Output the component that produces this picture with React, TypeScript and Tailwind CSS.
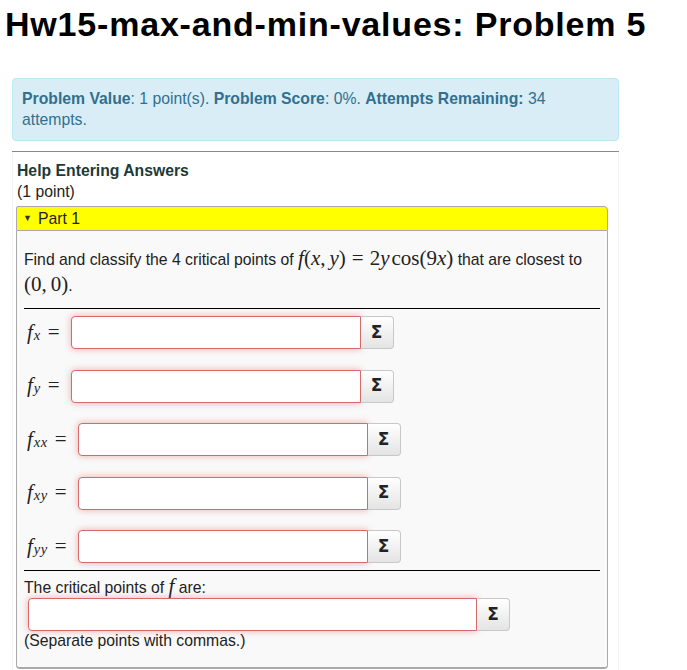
import React from "react";

const serif = { fontFamily: '"Liberation Serif", "DejaVu Serif", serif' } as const;

function MI({ children }: { children: React.ReactNode }) {
  return <span className="italic">{children}</span>;
}

function Label({ sub }: { sub: string }) {
  return (
    <span className="text-[21px] text-[#222] whitespace-nowrap pl-[3px]" style={serif}>
      <MI>f</MI>
      <sub className="italic text-[14.5px] relative top-[1px] ml-[1px] tracking-[0.5px]">{sub}</sub>
      <span className="ml-[7px]">=</span>
    </span>
  );
}

function AnswerBox({ w }: { w: string }) {
  return (
    <div className="flex items-stretch h-[33px]">
      <div
        className={`${w} bg-white border border-[#d46a6a] rounded-l-[4px] shadow-[0_0_7px_rgba(220,60,60,0.4)]`}
      />
      <div
        className="w-[33px] flex items-center justify-center border border-[#c8c8c8] border-l-0 rounded-r-[4px] bg-gradient-to-b from-white to-[#e4e4e4] text-[17px] font-bold text-[#222]"
        style={{ fontFamily: '"DejaVu Sans", sans-serif' }}
      >
        Σ
      </div>
    </div>
  );
}

function Row({ sub }: { sub: string }) {
  return (
    <div className="flex items-center h-[33px]">
      <Label sub={sub} />
      <div className="ml-[11px]">
        <AnswerBox w="w-[290px]" />
      </div>
    </div>
  );
}

export default function App() {
  return (
    <div
      className="bg-white w-[687px] h-[670px] overflow-hidden"
      style={{ fontFamily: '"Liberation Sans", Arial, sans-serif' }}
    >
      <h1 className="pt-[7px] pl-[5px] text-[34px] leading-[35px] font-bold text-black tracking-[0.8px] whitespace-nowrap">
        Hw15-max-and-min-values: Problem 5
      </h1>
      <div className="mt-[36px] ml-[12px] w-[607px] bg-[#d9edf7] border border-[#bce8f1] rounded-[4px] px-[9px] pt-[9px] pb-[10px] text-[15.75px] leading-[21px] text-[#31708f]">
        <span className="whitespace-nowrap">
          <b>Problem Value</b>: 1 point(s). <b>Problem Score</b>: 0%. <b>Attempts Remaining:</b> 34
        </span>
        <br />
        attempts.
      </div>
      <div className="mt-[10px] ml-[12px] w-[607px] border-t border-[#888]" />
      <div className="ml-[12px] w-[607px] border-x border-[#f2f2f2] px-[3px] pt-[8px] h-[600px]">
        <div className="text-[15.75px] leading-[21px] font-bold text-[#1d3a38] pl-[1px]">Help Entering Answers</div>
        <div className="text-[15.75px] leading-[21px] text-[#222] pl-[1px]">(1 point)</div>
        <div className="mt-[4px] w-[592px] h-[25px] bg-[#ffff00] border border-[#aaa] rounded-tr-[4px] rounded-tl-[2px] flex items-center pl-[6px] text-[15.75px] text-[#222]">
          <span className="text-[9px] mr-[6px] text-[#333]">▼</span>
          Part 1
        </div>
        <div className="w-[592px] h-[438px] bg-[#f9f9f9] border border-t-0 border-[#aaa] border-b-2 rounded-b-[4px] px-[7px] pt-[15px] text-[15.75px] text-[#222]">
          <div className="leading-[24px]">
            Find and classify the 4 critical points of{" "}
            <span className="text-[21px]" style={serif}>
              <MI>f</MI>(<MI>x</MI>,<span className="ml-[4px]" /><MI>y</MI>)<span className="mx-[6px]">=</span>2<MI>y</MI>
              <span className="ml-[2px]">cos</span>(9<MI>x</MI>)
            </span>{" "}
            that are closest to
            <br />
            <span className="text-[21px]" style={serif}>
              (0,<span className="ml-[4px]" />0)
            </span>
            .
          </div>
          <div className="mt-[10px] border-t border-black" />
          <div className="mt-[7px] flex flex-col gap-[20.5px]">
            <Row sub="x" />
            <Row sub="y" />
            <Row sub="xx" />
            <Row sub="xy" />
            <Row sub="yy" />
          </div>
          <div className="mt-[7px] border-t border-black" />
          <div className="mt-[5px] leading-[21px]">
            The critical points of{" "}
            <span className="text-[21px]" style={serif}>
              <MI>f</MI>
            </span>{" "}
            are:
          </div>
          <div className="mt-0 ml-[4px]">
            <AnswerBox w="w-[449px]" />
          </div>
          <div className="mt-0 leading-[20px]">(Separate points with commas.)</div>
        </div>
      </div>
    </div>
  );
}
